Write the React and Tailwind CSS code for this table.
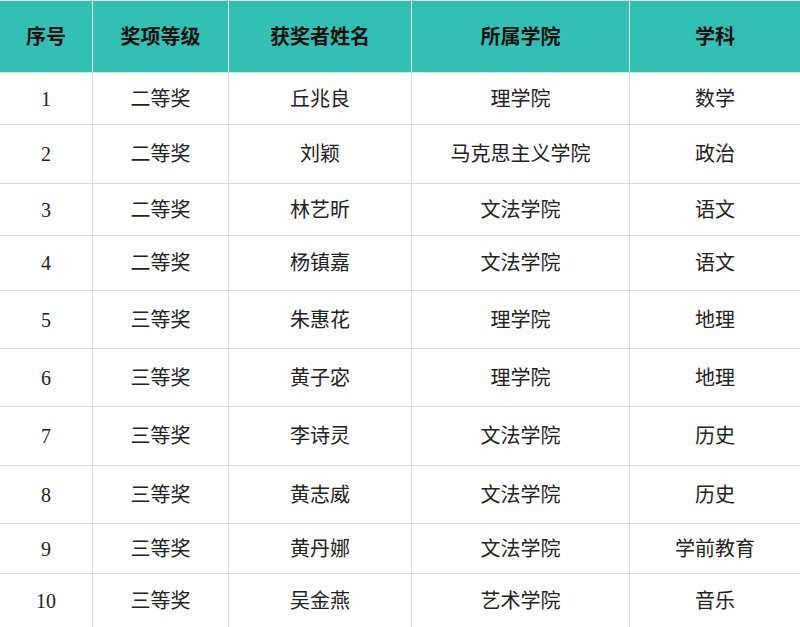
import React from "react";

const colW = ["w-[93px] border-r", "w-[136px] border-r", "w-[183px] border-r", "w-[218px] border-r", "flex-1"];
const rows = [
  ["1", "二等奖", "丘兆良", "理学院", "数学", "h-[52px]"],
  ["2", "二等奖", "刘颖", "马克思主义学院", "政治", "h-[59px]"],
  ["3", "二等奖", "林艺昕", "文法学院", "语文", "h-[52px]"],
  ["4", "二等奖", "杨镇嘉", "文法学院", "语文", "h-[55px]"],
  ["5", "三等奖", "朱惠花", "理学院", "地理", "h-[58px]"],
  ["6", "三等奖", "黄子宓", "理学院", "地理", "h-[58px]"],
  ["7", "三等奖", "李诗灵", "文法学院", "历史", "h-[59px]"],
  ["8", "三等奖", "黄志威", "文法学院", "历史", "h-[58px]"],
  ["9", "三等奖", "黄丹娜", "文法学院", "学前教育", "h-[50px]"],
  ["10", "三等奖", "吴金燕", "艺术学院", "音乐", "h-[55px]"],
];
const headers = ["序号", "奖项等级", "获奖者姓名", "所属学院", "学科"];

export default function App() {
  return (
    <div className="w-[800px] h-[627px] overflow-hidden bg-white font-['Liberation_Serif','Noto_Sans_CJK_SC',serif]">
      <div className="flex h-[73px] bg-[#31c0b3] border-t border-b border-[#dcdcdc]">
        {headers.map((h, i) => (
          <div
            key={i}
            className={`${colW[i]} border-[#e4e4e4] flex items-center justify-center text-[20px] font-bold text-[#111]`}
          >
            {h}
          </div>
        ))}
      </div>
      {rows.map((r, ri) => (
        <div key={ri} className={`${r[5]} flex border-b border-[#dcdcdc]`}>
          {r.slice(0, 5).map((c, i) => (
            <div
              key={i}
              className={`${colW[i]} border-[#dcdcdc] flex items-center justify-center text-[20px] text-[#222]`}
            >
              {c}
            </div>
          ))}
        </div>
      ))}
    </div>
  );
}
